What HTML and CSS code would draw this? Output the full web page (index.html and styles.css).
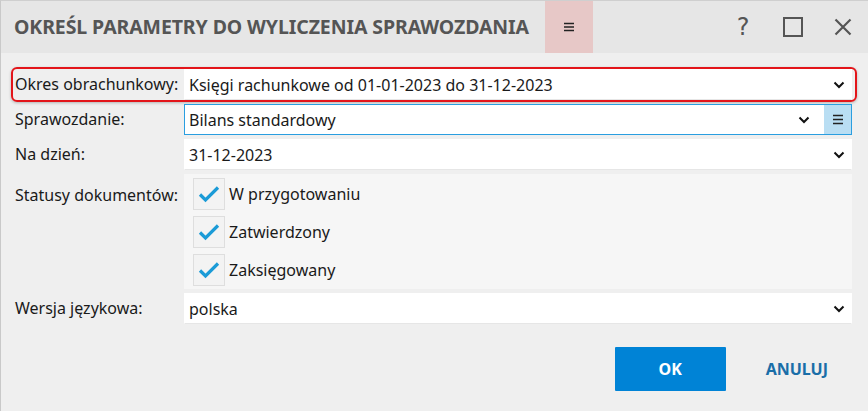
FILE: index.html
```html
<!DOCTYPE html>
<html lang="pl">
<head>
  <meta charset="UTF-8">
  <meta name="viewport" content="width=device-width, initial-scale=1.0">
  <title>Określ parametry</title>
  <link rel="stylesheet" href="styles.css">
</head>
<body>
  <div class="dialog">
    <div class="titlebar">
      <h1 class="title">OKREŚL PARAMETRY DO WYLICZENIA SPRAWOZDANIA</h1>
      <div class="title-menu">
        <svg width="12" height="10" viewBox="0 0 12 10"><path d="M1 1.5h10M1 5h10M1 8.5h10" stroke="#222" stroke-width="1.4"/></svg>
      </div>
      <div class="title-tools">
        <span class="tool help">?</span>
        <span class="tool">
          <svg width="20" height="20" viewBox="0 0 20 20"><rect x="1" y="1" width="18" height="18" fill="none" stroke="#555" stroke-width="2"/></svg>
        </span>
        <span class="tool">
          <svg width="18" height="18" viewBox="0 0 18 18"><path d="M1.5 1.5l15 15M16.5 1.5l-15 15" stroke="#555" stroke-width="2.2"/></svg>
        </span>
      </div>
    </div>

    <div class="form">
      <div class="row highlight">
        <label class="label">Okres obrachunkowy:</label>
        <div class="field">
          <span class="value">Księgi rachunkowe od 01-01-2023 do 31-12-2023</span>
          <svg class="chevron" width="12" height="8" viewBox="0 0 12 8"><path d="M1.5 1.5l4.5 4.5 4.5-4.5" fill="none" stroke="#111" stroke-width="2"/></svg>
        </div>
      </div>

      <div class="row">
        <label class="label">Sprawozdanie:</label>
        <div class="field focused">
          <span class="value">Bilans standardowy</span>
          <svg class="chevron" width="12" height="8" viewBox="0 0 12 8"><path d="M1.5 1.5l4.5 4.5 4.5-4.5" fill="none" stroke="#111" stroke-width="2"/></svg>
          <span class="field-menu">
            <svg width="12" height="11" viewBox="0 0 12 11"><path d="M1 1.5h10M1 5.5h10M1 9.5h10" stroke="#222" stroke-width="1.5"/></svg>
          </span>
        </div>
      </div>

      <div class="row">
        <label class="label">Na dzień:</label>
        <div class="field">
          <span class="value">31-12-2023</span>
          <svg class="chevron" width="12" height="8" viewBox="0 0 12 8"><path d="M1.5 1.5l4.5 4.5 4.5-4.5" fill="none" stroke="#111" stroke-width="2"/></svg>
        </div>
      </div>

      <div class="row">
        <label class="label label-top">Statusy dokumentów:</label>
        <div class="checks">
          <div class="check">
            <span class="box"><svg width="22" height="18" viewBox="0 0 22 18"><path d="M2 9.5l5.5 5.5L20 2.5" fill="none" stroke="#1b9bd7" stroke-width="3.2"/></svg></span>
            <span>W przygotowaniu</span>
          </div>
          <div class="check">
            <span class="box"><svg width="22" height="18" viewBox="0 0 22 18"><path d="M2 9.5l5.5 5.5L20 2.5" fill="none" stroke="#1b9bd7" stroke-width="3.2"/></svg></span>
            <span>Zatwierdzony</span>
          </div>
          <div class="check">
            <span class="box"><svg width="22" height="18" viewBox="0 0 22 18"><path d="M2 9.5l5.5 5.5L20 2.5" fill="none" stroke="#1b9bd7" stroke-width="3.2"/></svg></span>
            <span>Zaksięgowany</span>
          </div>
        </div>
      </div>

      <div class="row">
        <label class="label">Wersja językowa:</label>
        <div class="field">
          <span class="value">polska</span>
          <svg class="chevron" width="12" height="8" viewBox="0 0 12 8"><path d="M1.5 1.5l4.5 4.5 4.5-4.5" fill="none" stroke="#111" stroke-width="2"/></svg>
        </div>
      </div>
    </div>

    <div class="actions">
      <button class="btn btn-ok">OK</button>
      <button class="btn btn-cancel">ANULUJ</button>
    </div>
  </div>
</body>
</html>
```

FILE: styles.css
```css
html, body {
  margin: 0;
  padding: 0;
}

body {
  font-family: "Noto Sans", "Open Sans", sans-serif;
  font-size: 16px;
  color: #1a1a1a;
  background-color: #efefef;
}

.dialog {
  width: 868px;
  height: 411px;
  box-sizing: border-box;
  border-left: 1px solid #c9c9c9;
  border-top: 1px solid #cfcfcf;
  background-color: #efefef;
}

/* Pasek tytulu */
.titlebar {
  display: flex;
  align-items: stretch;
  height: 52px;
  background-color: #e6e6e6;
}
.title {
  margin: 0;
  padding-left: 13px;
  font-size: 19.5px;
  font-weight: 700;
  color: #555;
  line-height: 52px;
  letter-spacing: -0.1px;
  white-space: nowrap;
}
.title-menu {
  width: 48px;
  margin-left: 16px;
  background-color: #e7c8c7;
  display: flex;
  align-items: center;
  justify-content: center;
}
.title-tools {
  margin-left: auto;
  display: flex;
  align-items: center;
}
.tool {
  width: 50px;
  display: flex;
  justify-content: center;
  align-items: center;
  color: #555;
}
.help {
  font-size: 24px;
  font-family: "DejaVu Sans", sans-serif;
}

/* Formularz */
.form {
  padding: 14px 11px 0 10px;
}
.row {
  display: grid;
  grid-template-columns: 169px 1fr;
  border: 2px solid transparent;
  border-radius: 6px;
  padding: 0 3px 0 2px;
  min-height: 31px;
}
.row.highlight {
  border-color: #e3151a;
  box-shadow: 0 1px 3px rgba(0, 0, 0, 0.25);
}
.label {
  line-height: 31px;
  white-space: nowrap;
}
.label-top {
  line-height: 20px;
  padding-top: 11px;
}

.field {
  display: flex;
  align-items: center;
  height: 31px;
  box-sizing: border-box;
  background-color: #fff;
  border: 1px solid #fff;
  padding-left: 4px;
  border-bottom-color: #e6e6e6;
}
.field.focused {
  border-color: #2a9ee0;
}
.value {
  flex: 1;
  white-space: nowrap;
}
.chevron {
  margin-right: 6px;
}
.field-menu {
  width: 27px;
  align-self: stretch;
  margin-left: 8px;
  background-color: #b9def3;
  display: flex;
  align-items: center;
  justify-content: center;
}

.checks {
  background-color: #f6f6f6;
  padding: 4px 0 3px 9px;
  display: flex;
  flex-direction: column;
  gap: 6px;
}
.check {
  display: flex;
  align-items: center;
  gap: 4px;
}
.box {
  width: 30px;
  height: 30px;
  border: 1px solid #dedede;
  background-color: #f3f3f3;
  display: flex;
  align-items: center;
  justify-content: center;
}

/* Przyciski */
.actions {
  display: flex;
  justify-content: flex-end;
  align-items: center;
  padding: 21px 15px 0 0;
}
.btn {
  font-family: "Noto Sans", "Open Sans", sans-serif;
  font-size: 16px;
  font-weight: 700;
  border: none;
  height: 44px;
  cursor: pointer;
}
.btn-ok {
  width: 111px;
  background-color: #0083d6;
  color: #fff;
  border-radius: 1px;
}
.btn-cancel {
  background: none;
  color: #1a6ea8;
  padding: 0 25px 0 40px;
}
```
